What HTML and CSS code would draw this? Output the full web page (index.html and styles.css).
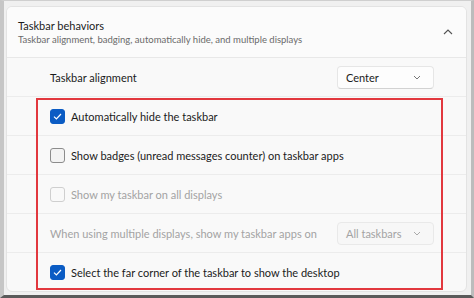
FILE: index.html
```html
<!DOCTYPE html>
<html lang="en">
<head>
    <meta charset="UTF-8">
    <meta name="viewport" content="width=device-width, initial-scale=1.0">
    <title>Taskbar behaviors</title>
    <link rel="stylesheet" href="styles.css">
</head>
<body>
    <div class="screen">
        <div class="card">
            <div class="card-header">
                <div class="header-text">
                    <div class="title">Taskbar behaviors</div>
                    <div class="subtitle">Taskbar alignment, badging, automatically hide, and multiple displays</div>
                </div>
                <svg class="chevron-up" width="10" height="6" viewBox="0 0 10 6">
                    <path d="M1 5 L5 1 L9 5" fill="none" stroke="#555" stroke-width="1.1"/>
                </svg>
            </div>
            <div class="row">
                <span class="label">Taskbar alignment</span>
                <div class="dropdown">
                    <span>Center</span>
                    <svg width="8" height="5" viewBox="0 0 8 5"><path d="M1 1 L4 4 L7 1" fill="none" stroke="#777" stroke-width="1"/></svg>
                </div>
            </div>
            <div class="row">
                <span class="checkbox checked"><svg width="9" height="7" viewBox="0 0 9 7"><path d="M1 3.6 L3.4 6 L8 1" fill="none" stroke="#fff" stroke-width="1.2"/></svg></span>
                <span class="label">Automatically hide the taskbar</span>
            </div>
            <div class="row">
                <span class="checkbox"></span>
                <span class="label">Show badges (unread messages counter) on taskbar apps</span>
            </div>
            <div class="row disabled">
                <span class="checkbox"></span>
                <span class="label">Show my taskbar on all displays</span>
            </div>
            <div class="row disabled">
                <span class="label">When using multiple displays, show my taskbar apps on</span>
                <div class="dropdown">
                    <span>All taskbars</span>
                    <svg width="8" height="5" viewBox="0 0 8 5"><path d="M1 1 L4 4 L7 1" fill="none" stroke="#aaa" stroke-width="1"/></svg>
                </div>
            </div>
            <div class="row last">
                <span class="checkbox checked"><svg width="9" height="7" viewBox="0 0 9 7"><path d="M1 3.6 L3.4 6 L8 1" fill="none" stroke="#fff" stroke-width="1.2"/></svg></span>
                <span class="label">Select the far corner of the taskbar to show the desktop</span>
            </div>
        </div>
        <div class="highlight"></div>
    </div>
</body>
</html>
```

FILE: styles.css
```css
body {
    margin: 0;
    font-family: Lato, "Noto Sans", sans-serif;
    color: #1b1b1b;
}
.screen {
    position: relative;
    width: 474px;
    height: 298px;
    box-sizing: border-box;
    background-color: #f0f0f0;
    border-left: 4px solid #c6c6c6;
    border-right: 3px solid #bcbcbc;
    border-top: 1px solid #cfcfcf;
    border-bottom: 3px solid #5a5a5a;
    padding: 5px 4px 0 2px;
}
.card {
    background-color: #f9f9f9;
    border: 1px solid #e3e3e3;
    border-radius: 6px;
    overflow: hidden;
}
.card-header {
    display: flex;
    align-items: center;
    justify-content: space-between;
    height: 50px;
    padding: 0 13px 0 11px;
    background-color: #fbfbfb;
    border-bottom: 1px solid #e8e8e8;
}
.title {
    font-size: 11px;
    line-height: 15px;
}
.subtitle {
    font-size: 9.5px;
    line-height: 13px;
    color: #6a6a6a;
}
.row {
    display: flex;
    align-items: center;
    height: 38px;
    padding: 0 32px 0 43px;
    border-bottom: 1px solid #ececec;
}
.row.last {
    border-bottom: none;
}
.row .label {
    flex: 1;
    font-size: 11px;
    white-space: nowrap;
}
.row.disabled .label {
    color: #a3a3a3;
}
.checkbox {
    display: flex;
    align-items: center;
    justify-content: center;
    width: 13px;
    height: 13px;
    margin-right: 6px;
    border: 1px solid #8c8c8c;
    border-radius: 3px;
    background-color: #f3f3f3;
}
.checkbox.checked {
    background-color: #0b5cc4;
    border-color: #0b5cc4;
}
.row.disabled .checkbox {
    border-color: #cfcfcf;
    background-color: #f9f9f9;
}
.dropdown {
    display: flex;
    align-items: center;
    justify-content: space-between;
    box-sizing: border-box;
    width: 97px;
    height: 23px;
    padding: 0 12px 0 8px;
    background-color: #fdfdfd;
    border: 1px solid #e6e6e6;
    border-bottom-color: #d2d2d2;
    border-radius: 4px;
    font-size: 11px;
}
.row.disabled .dropdown {
    background-color: #f7f7f7;
    border-color: #e9e9e9;
    color: #a3a3a3;
}
.highlight {
    position: absolute;
    left: 32px;
    top: 97px;
    width: 403px;
    height: 188px;
    border: 2px solid #e2383e;
}
```
